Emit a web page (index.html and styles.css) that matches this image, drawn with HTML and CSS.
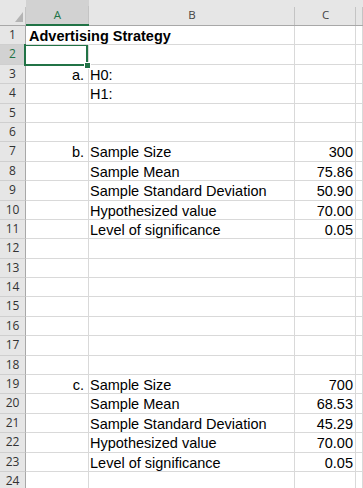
FILE: index.html
```html
<!DOCTYPE html>
<html>
<head>
<meta charset="utf-8">
<link rel="stylesheet" href="styles.css">
</head>
<body>
<div class="sheet">
  <div class="h corner"><svg width="8" height="10" viewBox="0 0 8 10"><polygon points="8,0 8,10 0,10" fill="#b4b4b4"/></svg></div>
  <div class="h selcol">A</div>
  <div class="h">B</div>
  <div class="h">C</div>
  <div class="h"></div>

  <div class="r">1</div><div class="c title">Advertising Strategy</div><div class="c"></div><div class="c"></div><div class="c"></div>
  <div class="r selrow">2</div><div class="c sel"><span class="handle"></span></div><div class="c"></div><div class="c"></div><div class="c"></div>
  <div class="r">3</div><div class="c lab">a.</div><div class="c txt">H0:</div><div class="c"></div><div class="c"></div>
  <div class="r">4</div><div class="c"></div><div class="c txt">H1:</div><div class="c"></div><div class="c"></div>
  <div class="r">5</div><div class="c"></div><div class="c"></div><div class="c"></div><div class="c"></div>
  <div class="r">6</div><div class="c"></div><div class="c"></div><div class="c"></div><div class="c"></div>
  <div class="r">7</div><div class="c lab">b.</div><div class="c txt">Sample Size</div><div class="c num">300</div><div class="c"></div>
  <div class="r">8</div><div class="c"></div><div class="c txt">Sample Mean</div><div class="c num">75.86</div><div class="c"></div>
  <div class="r">9</div><div class="c"></div><div class="c txt">Sample Standard Deviation</div><div class="c num">50.90</div><div class="c"></div>
  <div class="r">10</div><div class="c"></div><div class="c txt">Hypothesized value</div><div class="c num">70.00</div><div class="c"></div>
  <div class="r">11</div><div class="c"></div><div class="c txt">Level of significance</div><div class="c num">0.05</div><div class="c"></div>
  <div class="r">12</div><div class="c"></div><div class="c"></div><div class="c"></div><div class="c"></div>
  <div class="r">13</div><div class="c"></div><div class="c"></div><div class="c"></div><div class="c"></div>
  <div class="r">14</div><div class="c"></div><div class="c"></div><div class="c"></div><div class="c"></div>
  <div class="r">15</div><div class="c"></div><div class="c"></div><div class="c"></div><div class="c"></div>
  <div class="r">16</div><div class="c"></div><div class="c"></div><div class="c"></div><div class="c"></div>
  <div class="r">17</div><div class="c"></div><div class="c"></div><div class="c"></div><div class="c"></div>
  <div class="r">18</div><div class="c"></div><div class="c"></div><div class="c"></div><div class="c"></div>
  <div class="r">19</div><div class="c lab">c.</div><div class="c txt">Sample Size</div><div class="c num">700</div><div class="c"></div>
  <div class="r">20</div><div class="c"></div><div class="c txt">Sample Mean</div><div class="c num">68.53</div><div class="c"></div>
  <div class="r">21</div><div class="c"></div><div class="c txt">Sample Standard Deviation</div><div class="c num">45.29</div><div class="c"></div>
  <div class="r">22</div><div class="c"></div><div class="c txt">Hypothesized value</div><div class="c num">70.00</div><div class="c"></div>
  <div class="r">23</div><div class="c"></div><div class="c txt">Level of significance</div><div class="c num">0.05</div><div class="c"></div>
  <div class="r">24</div><div class="c"></div><div class="c"></div><div class="c"></div><div class="c"></div>
</div>
</body>
</html>
```
FILE: styles.css
```css
html, body {
  margin: 0;
  padding: 0;
  background: #ffffff;
  overflow: hidden;
}

.sheet {
  display: grid;
  grid-template-columns: 26px 63px 206px 61px 1fr;
  grid-template-rows: 26px repeat(24, 19.4px);
  width: 363px;
  font-family: "Liberation Sans", Arial, sans-serif;
  font-size: 14.5px;
  color: #000;
}

.sheet > div {
  box-sizing: border-box;
  min-width: 0;
}

.h {
  background: linear-gradient(#c4c4c4, #c4c4c4) right bottom / 1px 18px no-repeat, #e6e6e6;
  border-bottom: 1px solid #a8a8a8;
  font-family: "Open Sans", "Noto Sans", sans-serif;
  font-size: 11.5px;
  color: #444;
  text-align: center;
  padding-top: 6px;
  line-height: 18px;
}

.corner {
  display: flex;
  justify-content: flex-end;
  align-items: flex-end;
  padding: 0 3px 3px 0;
}

.corner svg {
  display: block;
}

.h.selcol {
  background: linear-gradient(#c4c4c4, #c4c4c4) right bottom / 1px 18px no-repeat, #d2d2d2;
  border-bottom: 2px solid #217346;
  color: #217346;
}

.r {
  background: #e6e6e6;
  border-right: 1px solid #a8a8a8;
  border-bottom: 1px solid #cfcfcf;
  font-family: "Open Sans", "Noto Sans", sans-serif;
  font-size: 12px;
  color: #333;
  text-align: center;
  line-height: 18.4px;
}

.r.selrow {
  background: #d2d2d2;
  color: #217346;
}

.c {
  border-right: 1px solid #d9d9d9;
  border-bottom: 1px solid #d9d9d9;
  line-height: 20px;
  white-space: nowrap;
  overflow: visible;
}

.title {
  font-weight: bold;
  padding-left: 3px;
  border-right-color: transparent;
  position: relative;
  z-index: 1;
}

.txt {
  padding-left: 1px;
}

.lab {
  text-align: right;
  padding-right: 4px;
}

.num {
  text-align: right;
  padding-right: 2px;
}

.sel {
  position: relative;
}

.sel::after {
  content: "";
  position: absolute;
  left: -2px;
  top: -1px;
  right: 0;
  bottom: -2px;
  border: 2px solid #217346;
}

.handle {
  position: absolute;
  right: -3px;
  bottom: -5px;
  width: 5px;
  height: 5px;
  background: #217346;
  border: 1px solid #ffffff;
  z-index: 2;
}
```
